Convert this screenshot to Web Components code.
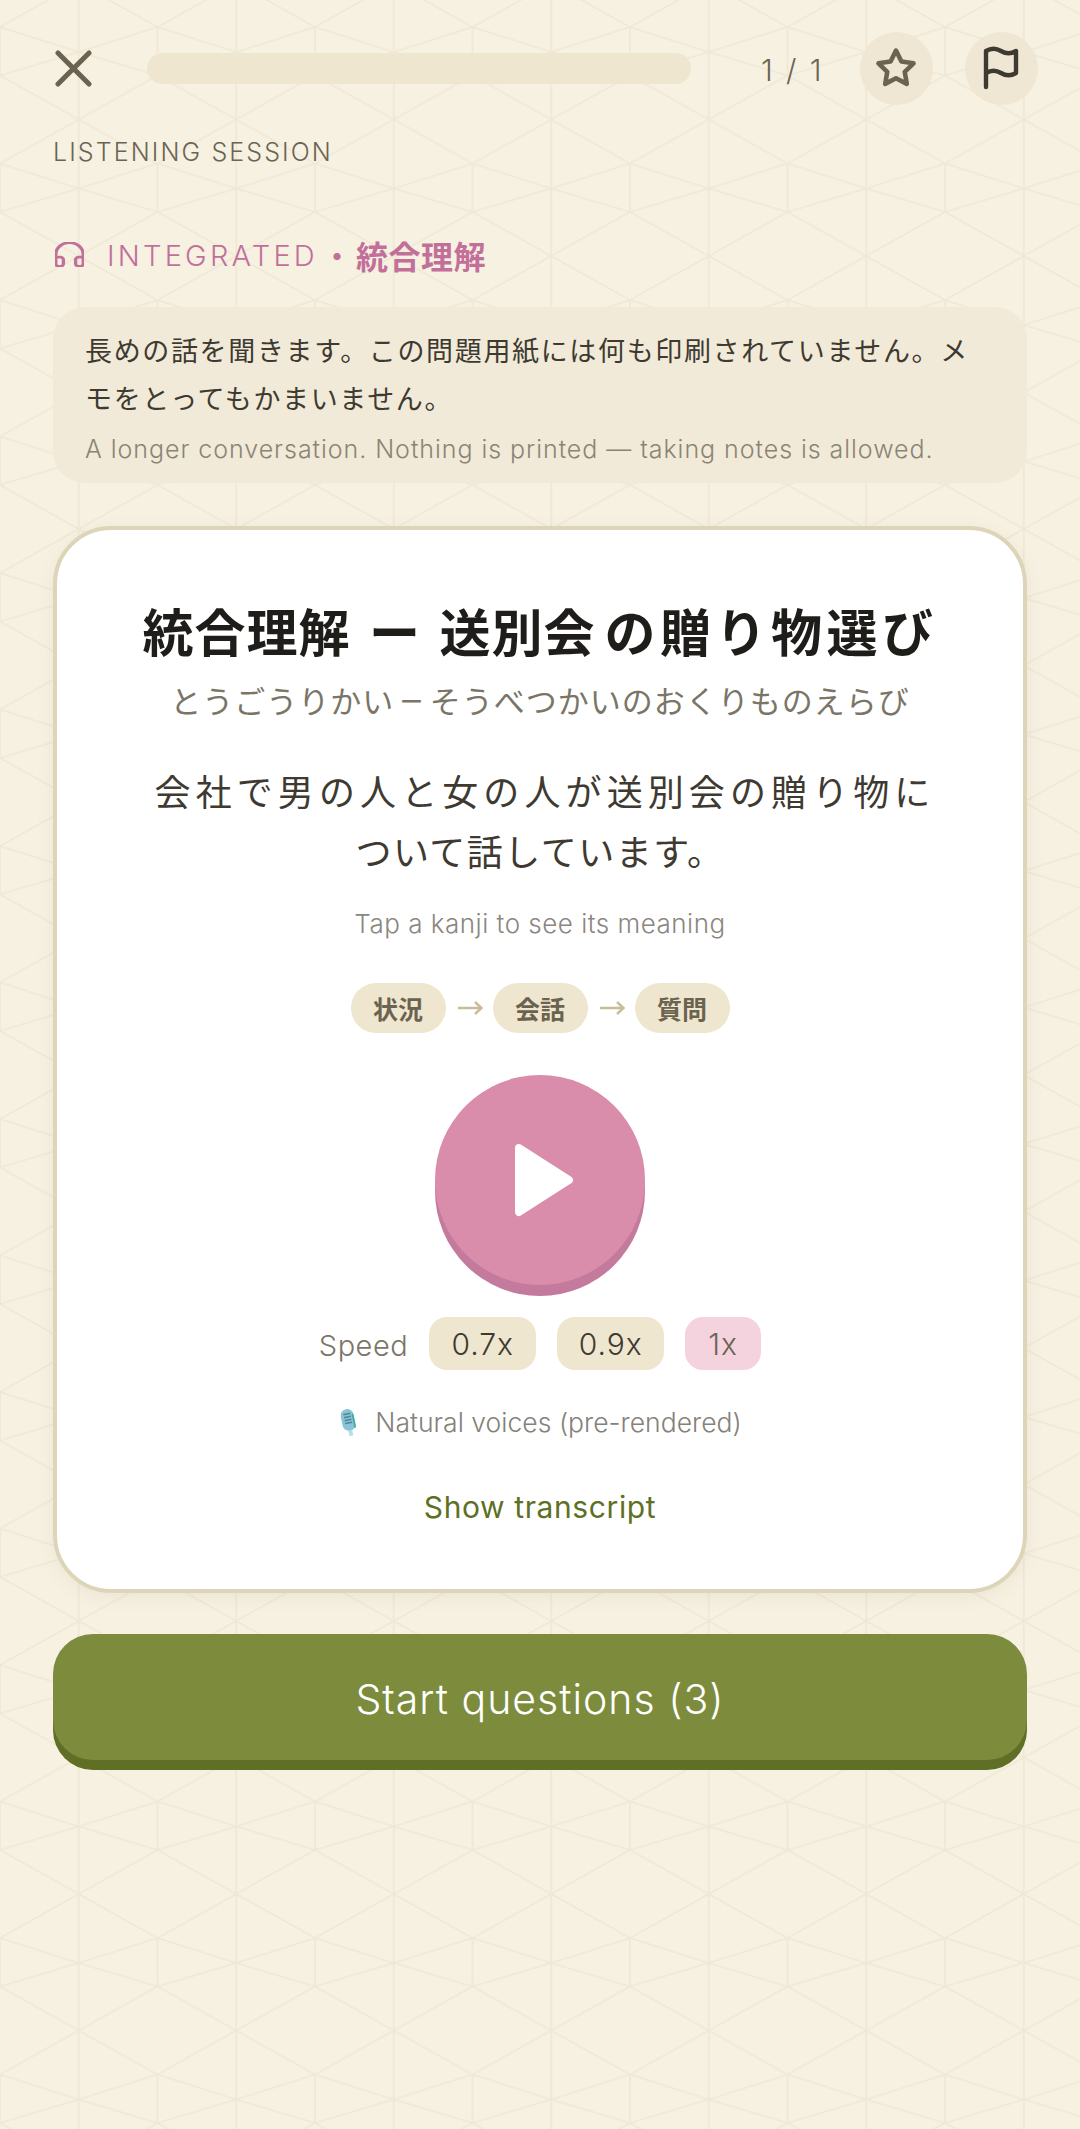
<!DOCTYPE html>
<html lang="ja">
<head>
<meta charset="utf-8">
<title>Listening session</title>
<style>
  html, body { margin: 0; padding: 0; background: #f7f1e2; }
  body { width: 1080px; min-height: 2129px; position: relative; font-family: Inter, "Noto Sans CJK JP", sans-serif; }
</style>
</head>
<body>
<paper-pattern></paper-pattern>
<session-page>
  <top-bar count="1 / 1"></top-bar>
  <session-label>LISTENING SESSION</session-label>
  <section-tag en="INTEGRATED" ja="統合理解"></section-tag>
  <info-note>
    長めの話を聞きます。この問題用紙には何も印刷されていません。メモをとってもかまいません。
    <span slot="en">A longer conversation. Nothing is printed — taking notes is allowed.</span>
  </info-note>
  <listen-card></listen-card>
  <start-button>Start questions (3)</start-button>
</session-page>

<script>
const LATIN = `Inter, "Noto Sans CJK JP", sans-serif`;
const JP = `"Noto Sans CJK JP", sans-serif`;

// base for every element: shadow root filled from a string
class BaseEl extends HTMLElement {
  constructor() {
    super();
    this.attachShadow({ mode: "open" });
    this.shadowRoot.innerHTML = this.markup();
  }
  markup() { return ""; }
}

class PaperPattern extends BaseEl {
  markup() {
    return `<style>
      :host { position: absolute; inset: 0; display: block; overflow: hidden; }
      svg { display: block; width: 100%; height: 100%; }
    </style>
    <svg xmlns="http://www.w3.org/2000/svg">
      <defs>
        <pattern id="p" width="157.5" height="136.5" patternUnits="userSpaceOnUse">
          <path fill="none" stroke="#efe8d6" stroke-width="1.6" d="
            M78.75 0V136.5
            M0 27V75.5 M157.5 27V75.5
            M0 27L78.75 52L157.5 27
            M0 75.5L78.75 52L157.5 75.5
            M0 75.5L78.75 119.5L157.5 75.5
            M0 163.5L78.75 119.5L157.5 163.5
            M0 27L78.75 -17L157.5 27"/>
        </pattern>
      </defs>
      <rect width="100%" height="100%" fill="url(#p)"/>
    </svg>`;
  }
}

class SessionPage extends BaseEl {
  markup() {
    return `<style>
      :host { display: block; position: relative; box-sizing: border-box; width: 1080px; padding-top: 31px; color: #3e3a31; }
    </style>
    <slot></slot>`;
  }
}

class TopBar extends BaseEl {
  markup() {
    return `<style>
      :host { display: flex; align-items: center; height: 74px; padding: 0 42px 0 55px; }
      .close { width: 37px; height: 37px; flex: none; }
      .bar { flex: 1; height: 31px; margin-left: 55px; border-radius: 16px; background: #efe6cf; }
      .count { flex: none; width: 62px; margin: 4px 37px 0 70px; font: 300 30px/36px ${LATIN}; letter-spacing: 2.4px; color: #6b6455; white-space: nowrap; text-align: center; }
      .round { flex: none; width: 73px; height: 73px; border-radius: 50%; background: #efe7d3; display: flex; align-items: center; justify-content: center; }
      .round + .round { margin-left: 32px; }
    </style>
    <svg class="close" viewBox="0 0 37 37" fill="none" stroke="#6b6350" stroke-width="5" stroke-linecap="round">
      <path d="M3 3L34 34M34 3L3 34"/>
    </svg>
    <div class="bar"></div>
    <div class="count">${this.getAttribute("count")}</div>
    <div class="round">
      <svg width="44" height="44" viewBox="0 0 24 24" fill="none" stroke="#6b6350" stroke-width="2.5" stroke-linejoin="round" style="margin-left:-2px">
        <path d="M12 2.5l2.95 6 6.6.95-4.78 4.65 1.13 6.57L12 17.56l-5.9 3.11 1.13-6.57L2.45 9.45l6.6-.95z"/>
      </svg>
    </div>
    <div class="round">
      <svg width="37" height="44" viewBox="0 0 37 44" fill="none" stroke="#3e3a31" stroke-width="4.4" stroke-linecap="round" stroke-linejoin="round" style="margin-left:-2px">
        <path d="M4 41V5C9 2 14 2 19 5S29 8 34 5V27C29 30 24 30 19 27S9 24 4 27"/>
      </svg>
    </div>`;
  }
}

class SessionLabel extends BaseEl {
  markup() {
    return `<style>
      :host { display: block; margin: 32px 0 0 53px; font: 300 25px/30px ${LATIN}; letter-spacing: 2.1px; color: #6b6455; }
    </style><slot></slot>`;
  }
}

class SectionTag extends BaseEl {
  markup() {
    return `<style>
      :host { display: flex; align-items: center; height: 40px; margin: 69px 0 0 55px; color: #c2709a; }
      svg { width: 29px; height: 25px; flex: none; margin: -3px 23px 0 0; }
      .en { font: 300 29px/40px ${LATIN}; letter-spacing: 3.2px; }
      .dot { font: 700 28px/40px ${JP}; width: 38px; text-align: center; }
      .ja { margin-top: -3px; font: 700 32px/40px ${JP}; letter-spacing: .5px; }
    </style>
    <svg viewBox="2.5 2.5 19 19" preserveAspectRatio="none" fill="none" stroke="currentColor" stroke-width="2.2" stroke-linecap="round" stroke-linejoin="round">
      <path d="M3 14h3a2 2 0 0 1 2 2v3a2 2 0 0 1-2 2H5a2 2 0 0 1-2-2v-7a9 9 0 0 1 18 0v7a2 2 0 0 1-2 2h-1a2 2 0 0 1-2-2v-3a2 2 0 0 1 2-2h3"/>
    </svg>
    <span class="en">${this.getAttribute("en")}</span>
    <span class="dot">・</span>
    <span class="ja">${this.getAttribute("ja")}</span>`;
  }
}

class InfoNote extends BaseEl {
  markup() {
    return `<style>
      :host { display: block; box-sizing: border-box; margin: 31px 53px 0; padding: 19px 40px 17px 32px; border-radius: 32px; background: #f1ead8; }
      .ja { font: 400 27px/48px ${JP}; letter-spacing: 1.65px; color: #3e3a31; }
      .en { margin-top: 10px; font: 300 25px/34px ${LATIN}; letter-spacing: .95px; color: #8b8474; white-space: nowrap; }
    </style>
    <div class="ja"><slot></slot></div>
    <div class="en"><slot name="en"></slot></div>`;
  }
}

class ListenChip extends BaseEl {
  markup() {
    return `<style>
      :host { display: flex; align-items: center; justify-content: center; width: 95px; height: 50px; border-radius: 25px; background: #efe6cf; font: 700 25px/50px ${JP}; color: #6b6350; }
    </style><slot></slot>`;
  }
}

class SpeedChip extends BaseEl {
  markup() {
    return `<style>
      :host { display: flex; align-items: center; justify-content: center; box-sizing: border-box; width: 107px; height: 53px; padding-top: 2px; border-radius: 18px; background: #efe6cf; font: 300 30px/51px ${LATIN}; letter-spacing: 1px; color: #3e3a31; }
      :host([active]) { width: 76px; background: #f5d3de; color: #6b6455; }
    </style><slot></slot>`;
  }
}

class PlayButton extends BaseEl {
  markup() {
    return `<style>
      :host { display: flex; align-items: center; justify-content: center; box-sizing: border-box; width: 210px; height: 210px; margin-bottom: 11px; border-radius: 50%; background: #d98daa; box-shadow: 0 11px 0 #c47a9c; }
      svg { width: 60px; height: 74px; margin-left: 8px; }
    </style>
    <svg viewBox="0 0 60 74"><path d="M5 5L55 37L5 69Z" fill="#fff" stroke="#fff" stroke-width="8" stroke-linejoin="round"/></svg>`;
  }
}

class ListenCard extends BaseEl {
  markup() {
    return `<style>
      :host { display: block; box-sizing: border-box; margin: 43px 53px 0; height: 1067px; padding-top: 70px; border: 4px solid #ddd5b8; border-radius: 58px; background: #fff; box-shadow: 0 4px 18px rgba(120,105,60,.08); text-align: center; }
      h1 { margin: 0; font: 700 51px/60px ${JP}; color: #1f1d1a; white-space: nowrap; letter-spacing: 1px; }
      h1 .dash { margin: 0 6px; }
      h1 .gap { margin-left: 9px; letter-spacing: 4.5px; }
      .sub { margin-top: 20px; font: 400 31px/40px ${JP}; color: #7a7567; white-space: nowrap; letter-spacing: 1px; }
      .sub .dash { display: inline-block; font-size: 42px; line-height: 30px; margin: 0 6px; }
      .desc { margin-top: 40px; font: 400 36px/60px ${JP}; letter-spacing: 5.1px; color: #3e3a31; }
      .desc .first { padding-left: 10px; }
      .desc .tight { letter-spacing: 1.5px; }
      .tap { margin-top: 26px; font: 300 26px/36px ${LATIN}; color: #8b8680; letter-spacing: .5px; }
      .flow { display: flex; justify-content: center; align-items: center; margin-top: 41px; height: 50px; }
      .flow svg { width: 26px; height: 16px; margin: 0 10px 0 11px; flex: none; }
      .play { display: flex; justify-content: center; margin-top: 42px; }
      .speed { display: flex; justify-content: center; align-items: center; height: 53px; margin-top: 21px; gap: 21px; font: 300 29px/53px ${LATIN}; letter-spacing: .5px; color: #7a7567; }
      .speed span { position: relative; top: 2px; }
      .voices { display: flex; justify-content: center; align-items: center; gap: 16px; margin-top: 34px; font: 300 26.5px/36px ${LATIN}; color: #85817a; letter-spacing: .02px; }
      .voices svg { width: 21px; height: 31px; flex: none; }
      .transcript { margin-top: 47px; font: 400 30px/40px ${LATIN}; color: #5e7024; letter-spacing: .6px; }
    </style>
    <h1>統合理解 <span class="dash">ー</span> 送別会<span class="gap">の贈り物選び</span></h1>
    <div class="sub">とうごうりかい<span class="dash">–</span>そうべつかいのおくりものえらび</div>
    <div class="desc"><span class="first">会社で男の人と女の人が送別会の贈り物に</span><br><span class="tight">ついて話しています。</span></div>
    <div class="tap">Tap a kanji to see its meaning</div>
    <div class="flow">
      <listen-chip>状況</listen-chip>
      <svg viewBox="0 0 26 16" fill="none" stroke="#c8bd97" stroke-width="2.4"><path d="M1 8H24M18 2L24.5 8L18 14"/></svg>
      <listen-chip>会話</listen-chip>
      <svg viewBox="0 0 26 16" fill="none" stroke="#c8bd97" stroke-width="2.4"><path d="M1 8H24M18 2L24.5 8L18 14"/></svg>
      <listen-chip>質問</listen-chip>
    </div>
    <div class="play"><play-button></play-button></div>
    <div class="speed">
      <span>Speed</span>
      <speed-chip>0.7x</speed-chip>
      <speed-chip>0.9x</speed-chip>
      <speed-chip active>1x</speed-chip>
    </div>
    <div class="voices">
      <svg viewBox="0 0 21 31">
        <g transform="rotate(-12 10 15)">
          <rect x="4" y="2" width="13" height="22" rx="6.5" fill="#86c4d6"/>
          <path d="M7 7H14M7 10H14M7 13H14M7 16H14" stroke="#4e8698" stroke-width="1.5"/>
          <path d="M10.5 24V29" stroke="#b8dbe4" stroke-width="4"/>
          <path d="M16 8V22" stroke="#3aa89a" stroke-width="1.6"/>
        </g>
      </svg>
      <span>Natural voices (pre-rendered)</span>
    </div>
    <div class="transcript">Show transcript</div>`;
  }
}

class StartButton extends BaseEl {
  markup() {
    return `<style>
      :host { display: flex; align-items: center; justify-content: center; box-sizing: border-box; margin: 41px 53px 0; height: 126px; padding-top: 4px; border-radius: 40px; background: #7c8c3c; box-shadow: 0 10px 0 #5f6f25; font: 300 41px/122px ${LATIN}; letter-spacing: 1px; color: #fff; }
    </style><slot></slot>`;
  }
}

customElements.define("paper-pattern", PaperPattern);
customElements.define("session-page", SessionPage);
customElements.define("top-bar", TopBar);
customElements.define("session-label", SessionLabel);
customElements.define("section-tag", SectionTag);
customElements.define("info-note", InfoNote);
customElements.define("listen-chip", ListenChip);
customElements.define("speed-chip", SpeedChip);
customElements.define("play-button", PlayButton);
customElements.define("listen-card", ListenCard);
customElements.define("start-button", StartButton);
</script>
</body>
</html>
